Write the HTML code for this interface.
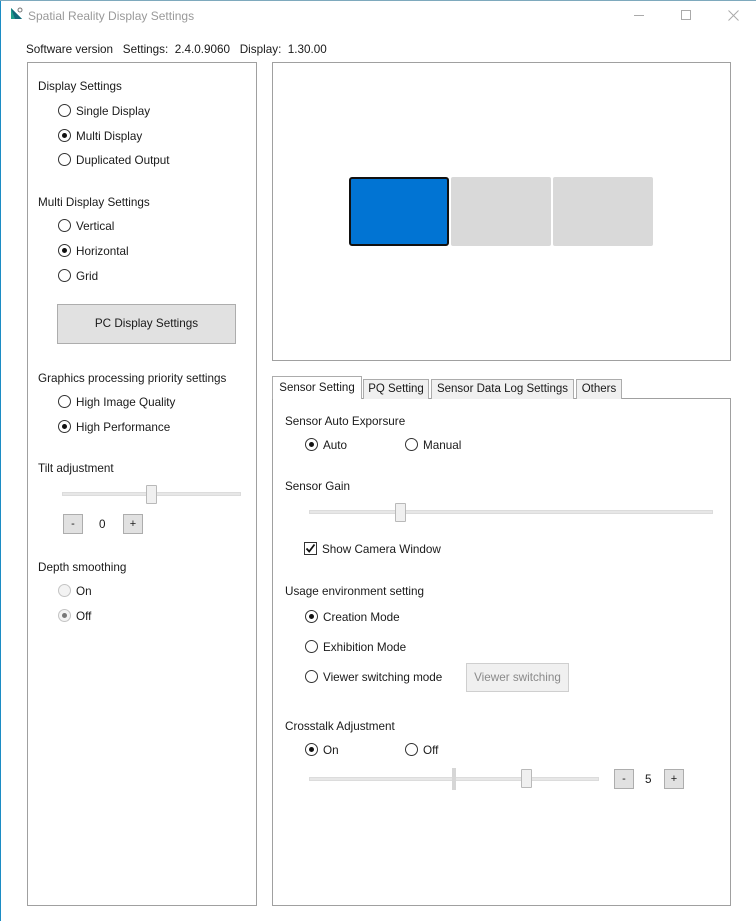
<!DOCTYPE html>
<html><head><meta charset="utf-8"><style>
*{margin:0;padding:0;box-sizing:border-box}
body{width:756px;height:921px;background:#fff;position:relative;overflow:hidden;font-family:"Liberation Sans",sans-serif;font-size:11.7px;color:#1a1a1a}
.a{position:absolute}
.t{position:absolute;white-space:nowrap;line-height:14px;top:0}
.box{position:absolute;border:1px solid #a0a0a0;background:#fff}
.r{position:absolute;width:13px;height:13px;border:1px solid #333;border-radius:50%;background:#fff}
.r.on::after{content:"";position:absolute;left:3px;top:3px;width:5px;height:5px;border-radius:50%;background:#111}
.r.dis{border-color:#c4c4c4;background:#f3f3f3}
.r.dis.on::after{background:#777}
.btn{position:absolute;background:#e1e1e1;border:1px solid #adadad;text-align:center;white-space:nowrap}
.track{position:absolute;height:4px;background:#e7e7e7;border:1px solid #dcdcdc}
.thumb{position:absolute;width:11px;height:19px;background:#f0f0f0;border:1px solid #b9b9b9;border-radius:1px}
.tab{position:absolute;border:1px solid #acacac;border-bottom:none;background:#f0f0f0;text-align:center;line-height:18px;white-space:nowrap;font-size:11.5px}
</style></head><body>
<div class="a" style="left:0;top:0;width:1px;height:921px;background:#1c8cc4"></div>
<div class="a" style="left:0;top:0;width:756px;height:1px;background:#7ea9bd"></div>
<svg class="a" style="left:10px;top:6px" width="14" height="14" viewBox="0 0 14 14"><polygon points="1,2 1,13 12,13" fill="#1e9e8c"/><polygon points="1,2 12,13 5,13" fill="#11697a"/><circle cx="10" cy="4" r="2" fill="none" stroke="#777" stroke-width="1"/></svg>
<div class="t" style="left:28px;top:9px;color:#999;font-size:12px">Spatial Reality Display Settings</div>
<div class="a" style="left:634px;top:15px;width:10px;height:1px;background:#aaa"></div>
<div class="a" style="left:681px;top:10px;width:10px;height:10px;border:1px solid #aaa"></div>
<svg class="a" style="left:728px;top:10px" width="11" height="11"><path d="M0.5 0.5L10.5 10.5M10.5 0.5L0.5 10.5" stroke="#aaa" stroke-width="1"/></svg>
<div class="t" style="left:26px;top:43px">Software version&nbsp;&nbsp; Settings:&nbsp; 2.4.0.9060&nbsp;&nbsp; Display:&nbsp; 1.30.00</div>

<div class="box" style="left:27px;top:62px;width:230px;height:844px"></div>
<div class="t" style="left:38px;top:80px">Display Settings</div>
<div class="r" style="left:58px;top:104px"></div><div class="t" style="left:76px;top:105px">Single Display</div>
<div class="r on" style="left:58px;top:129px"></div><div class="t" style="left:76px;top:130px">Multi Display</div>
<div class="r" style="left:58px;top:153px"></div><div class="t" style="left:76px;top:154px">Duplicated Output</div>
<div class="t" style="left:38px;top:196px">Multi Display Settings</div>
<div class="r" style="left:58px;top:219px"></div><div class="t" style="left:76px;top:220px">Vertical</div>
<div class="r on" style="left:58px;top:244px"></div><div class="t" style="left:76px;top:245px">Horizontal</div>
<div class="r" style="left:58px;top:269px"></div><div class="t" style="left:76px;top:270px">Grid</div>
<div class="btn" style="left:57px;top:304px;width:179px;height:40px;line-height:38px">PC Display Settings</div>
<div class="t" style="left:38px;top:372px">Graphics processing priority settings</div>
<div class="r" style="left:58px;top:395px"></div><div class="t" style="left:76px;top:396px">High Image Quality</div>
<div class="r on" style="left:58px;top:420px"></div><div class="t" style="left:76px;top:421px">High Performance</div>
<div class="t" style="left:38px;top:462px">Tilt adjustment</div>
<div class="track" style="left:62px;top:492px;width:179px"></div>
<div class="thumb" style="left:146px;top:485px"></div>
<div class="btn" style="left:63px;top:514px;width:20px;height:20px;line-height:18px;font-size:11px">-</div>
<div class="t" style="left:99px;top:518px">0</div>
<div class="btn" style="left:123px;top:514px;width:20px;height:20px;line-height:18px;font-size:11px">+</div>
<div class="t" style="left:38px;top:561px">Depth smoothing</div>
<div class="r dis" style="left:58px;top:584px"></div><div class="t" style="left:76px;top:585px">On</div>
<div class="r dis on" style="left:58px;top:609px"></div><div class="t" style="left:76px;top:610px">Off</div>

<div class="box" style="left:272px;top:62px;width:459px;height:299px"></div>
<div class="a" style="left:349px;top:177px;width:100px;height:69px;background:#0174d3;border:2px solid #111;border-radius:3px"></div>
<div class="a" style="left:451px;top:177px;width:100px;height:69px;background:#d9d9d9;border-radius:2px"></div>
<div class="a" style="left:553px;top:177px;width:100px;height:69px;background:#d9d9d9;border-radius:2px"></div>

<div class="box" style="left:272px;top:398px;width:459px;height:508px"></div>
<div class="tab" style="left:363px;top:379px;width:66px;height:20px">PQ Setting</div>
<div class="tab" style="left:431px;top:379px;width:143px;height:20px">Sensor Data Log Settings</div>
<div class="tab" style="left:576px;top:379px;width:46px;height:20px">Others</div>
<div class="tab" style="left:272px;top:376px;width:90px;height:23px;background:#fff;line-height:22px">Sensor Setting</div>
<div class="t" style="left:285px;top:415px">Sensor Auto Exporsure</div>
<div class="r on" style="left:305px;top:438px"></div><div class="t" style="left:323px;top:439px">Auto</div>
<div class="r" style="left:405px;top:438px"></div><div class="t" style="left:423px;top:439px">Manual</div>
<div class="t" style="left:285px;top:480px">Sensor Gain</div>
<div class="track" style="left:309px;top:510px;width:404px"></div>
<div class="thumb" style="left:395px;top:503px"></div>
<div class="a" style="left:304px;top:542px;width:13px;height:13px;border:1px solid #333"></div>
<svg class="a" style="left:305px;top:543px" width="11" height="11"><path d="M1.5 5.5L4.2 8.5L9.5 1.5" stroke="#111" stroke-width="1.8" fill="none"/></svg>
<div class="t" style="left:322px;top:543px">Show Camera Window</div>
<div class="t" style="left:285px;top:585px">Usage environment setting</div>
<div class="r on" style="left:305px;top:610px"></div><div class="t" style="left:323px;top:611px">Creation Mode</div>
<div class="r" style="left:305px;top:640px"></div><div class="t" style="left:323px;top:641px">Exhibition Mode</div>
<div class="r" style="left:305px;top:670px"></div><div class="t" style="left:323px;top:671px">Viewer switching mode</div>
<div class="btn" style="left:466px;top:663px;width:103px;height:29px;line-height:27px;background:#f0f0f0;border-color:#cfcfcf;color:#8a8a8a">Viewer switching</div>
<div class="t" style="left:285px;top:720px">Crosstalk Adjustment</div>
<div class="r on" style="left:305px;top:743px"></div><div class="t" style="left:323px;top:744px">On</div>
<div class="r" style="left:405px;top:743px"></div><div class="t" style="left:423px;top:744px">Off</div>
<div class="track" style="left:309px;top:777px;width:290px"></div>
<div class="a" style="left:452px;top:768px;width:4px;height:22px;background:#d6d6d6"></div>
<div class="thumb" style="left:521px;top:769px"></div>
<div class="btn" style="left:614px;top:769px;width:20px;height:20px;line-height:18px;font-size:11px">-</div>
<div class="t" style="left:645px;top:773px">5</div>
<div class="btn" style="left:664px;top:769px;width:20px;height:20px;line-height:18px;font-size:11px">+</div>
</body></html>
